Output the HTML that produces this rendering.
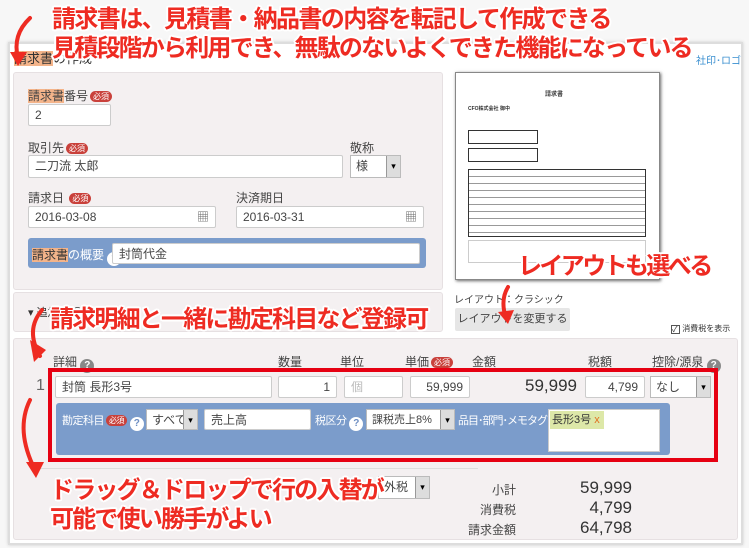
<!DOCTYPE html>
<html><head><meta charset="utf-8">
<style>
*{margin:0;padding:0;box-sizing:border-box}
body{width:749px;height:548px;background:#f7f7f7;position:relative;overflow:hidden;font-family:"Liberation Sans","Noto Sans CJK JP",sans-serif;font-size:12px;color:#333}
.a{position:absolute}
.panel{left:8px;top:42px;width:735px;height:503px;background:#fff;border:2px solid #ddd;box-shadow:0 0 3px #ccc}
.box{background:#f4f0f1;border:1px solid #e6e0e2;border-radius:3px}
.inp{position:absolute;background:#fff;border:1px solid #ccc;border-radius:2px;font-size:12px;line-height:20px;padding:0 6px;color:#444}
.sel{position:absolute;background:#fff;border:1px solid #bbb;font-size:12px;line-height:20px;padding:0 5px;color:#444;white-space:nowrap;overflow:hidden}
.sel:after{content:"▾";position:absolute;right:0;top:0;width:13px;height:100%;background:#ddd;border-left:1px solid #999;font-size:9px;text-align:center;color:#000}
.lbl{position:absolute;font-size:12px;color:#444;white-space:nowrap}
.req{display:inline-block;background:#c9413b;color:#fff;font-size:8px;border-radius:6px;padding:0 3px;line-height:11px;vertical-align:1px;margin-left:2px}
.hl{background:#f4b48a}
.q{display:inline-block;width:14px;height:14px;border-radius:50%;background:#888;color:#fff;font-size:10px;text-align:center;line-height:14px;font-weight:bold;vertical-align:-2px}
.qw{background:#fff;color:#6d8ec2}
.red{position:absolute;color:#ee2b22;font-weight:bold;font-size:24px;letter-spacing:-1.8px;white-space:nowrap;text-shadow:-2px 0 #fff,2px 0 #fff,0 -2px #fff,0 2px #fff,-1.5px -1.5px #fff,1.5px 1.5px #fff,-1.5px 1.5px #fff,1.5px -1.5px #fff;line-height:28px}
.num{position:absolute;font-size:17px;color:#333;text-align:right}
.blab{font-size:11px;letter-spacing:-0.5px;color:#fff}
</style></head><body>
<div class="a panel"></div>
<div class="a" style="left:14px;top:48px;font-size:13px;color:#333"><span class="hl">請求書</span>の作成</div>
<div class="a" style="left:696px;top:52px;font-size:10px;color:#3a8fd0">社印･ロゴ</div>

<div class="a box" style="left:13px;top:72px;width:430px;height:218px"></div>
<div class="lbl" style="left:28px;top:87px"><span class="hl">請求書</span>番号<span class="req">必須</span></div>
<div class="inp" style="left:28px;top:104px;width:83px;height:22px">2</div>
<div class="lbl" style="left:28px;top:139px">取引先<span class="req">必須</span></div>
<div class="inp" style="left:28px;top:155px;width:315px;height:23px">二刀流 太郎</div>
<div class="lbl" style="left:350px;top:139px">敬称</div>
<div class="sel" style="left:350px;top:155px;width:51px;height:23px">様</div>
<div class="lbl" style="left:28px;top:189px">請求日 <span class="req">必須</span></div>
<div class="lbl" style="left:236px;top:189px">決済期日</div>
<div class="inp" style="left:28px;top:206px;width:188px;height:22px">2016-03-08<span style="position:absolute;right:6px;color:#666">▦</span></div>
<div class="inp" style="left:236px;top:206px;width:188px;height:22px">2016-03-31<span style="position:absolute;right:6px;color:#666">▦</span></div>
<div class="a" style="left:28px;top:238px;width:398px;height:30px;background:#7b9ccb;border-radius:3px"></div>
<div class="lbl" style="left:32px;top:246px;color:#fff"><span class="hl" style="color:#333">請求書</span>の概要 <span class="q qw">?</span></div>
<div class="inp" style="left:112px;top:243px;width:308px;height:21px">封筒代金</div>

<div class="a" style="left:455px;top:72px;width:205px;height:208px;background:#fff;border:1px solid #888;box-shadow:1px 1px 3px #666"></div>
<div class="a" style="left:545px;top:89px;font-size:6px;font-weight:bold">請求書</div>
<div class="a" style="left:468px;top:105px;font-size:5px;font-weight:bold">CFO株式会社 御中</div>
<div class="a" style="left:468px;top:130px;width:70px;height:14px;border:1px solid #333"></div>
<div class="a" style="left:468px;top:148px;width:70px;height:14px;border:1px solid #333"></div>
<div class="a" style="left:468px;top:169px;width:178px;height:68px;border:1px solid #333;background:repeating-linear-gradient(#fff 0 6px,#999 6px 7px)"></div>
<div class="a" style="left:468px;top:240px;width:178px;height:23px;border:1px solid #ccc"></div>
<div class="a" style="left:454px;top:291px;font-size:10px;color:#444">レイアウト：クラシック</div>
<div class="a" style="left:455px;top:308px;width:115px;height:23px;background:#e6e6e6;border-radius:2px;font-size:11px;line-height:23px;text-align:center;color:#444">レイアウトを変更する</div>

<div class="a box" style="left:13px;top:292px;width:430px;height:40px"></div>
<div class="a" style="left:28px;top:304px;font-size:11px">▾ 追加情報…</div>
<div class="a" style="left:668px;top:320px;width:71px;height:18px;background:#fff;font-size:8px;line-height:18px;padding-left:3px"><span style="display:inline-block;width:9px;height:9px;border:1px solid #555;font-size:8px;line-height:8px;vertical-align:-1px">✓</span> 消費税を表示</div>

<div class="a box" style="left:13px;top:338px;width:725px;height:202px"></div>
<div class="lbl" style="left:53px;top:353px">詳細 <span class="q">?</span></div>
<div class="lbl" style="left:278px;top:353px">数量</div>
<div class="lbl" style="left:340px;top:353px">単位</div>
<div class="lbl" style="left:405px;top:353px">単価<span class="req">必須</span></div>
<div class="lbl" style="left:472px;top:353px">金額</div>
<div class="lbl" style="left:588px;top:353px">税額</div>
<div class="lbl" style="left:652px;top:353px">控除/源泉 <span class="q">?</span></div>

<div class="a" style="left:48px;top:368px;width:670px;height:94px;border:4px solid #e60012"></div>
<div class="a" style="left:36px;top:377px;font-size:16px;color:#666">1</div>
<div class="inp" style="left:55px;top:376px;width:217px;height:22px">封筒 長形3号</div>
<div class="inp" style="left:278px;top:376px;width:59px;height:22px;text-align:right">1</div>
<div class="inp" style="left:344px;top:376px;width:59px;height:22px;color:#bbb">個</div>
<div class="inp" style="left:410px;top:376px;width:60px;height:22px;text-align:right">59,999</div>
<div class="num" style="left:500px;top:376px;width:77px">59,999</div>
<div class="inp" style="left:585px;top:376px;width:60px;height:22px;text-align:right">4,799</div>
<div class="sel" style="left:650px;top:376px;width:61px;height:22px">なし</div>
<div class="a" style="left:56px;top:403px;width:614px;height:52px;background:#7b9ccb;border-radius:3px"></div>
<div class="lbl blab" style="left:62px;top:412px">勘定科目<span class="req">必須</span> <span class="q qw">?</span></div>
<div class="sel" style="left:146px;top:409px;width:52px;height:21px">すべて</div>
<div class="inp" style="left:204px;top:409px;width:107px;height:21px">売上高</div>
<div class="lbl blab" style="left:315px;top:412px">税区分 <span class="q qw">?</span></div>
<div class="sel" style="left:366px;top:409px;width:89px;height:21px;font-size:11px">課税売上8%</div>
<div class="lbl blab" style="left:458px;top:412px;letter-spacing:-1px">品目･部門･メモタグ</div>
<div class="a" style="left:548px;top:409px;width:112px;height:43px;background:#fff;border:1px solid #ccc"></div>
<div class="a" style="left:550px;top:411px;width:54px;height:18px;background:#dde8a8;font-size:11px;line-height:18px;padding-left:2px">長形3号 <span style="color:#e07020">x</span></div>
<div class="a" style="left:38px;top:468px;width:440px;height:1px;background:#ddd"></div>
<div class="sel" style="left:378px;top:476px;width:52px;height:23px">外税</div>
<div class="lbl" style="left:492px;top:481px">小計</div>
<div class="lbl" style="left:480px;top:501px">消費税</div>
<div class="lbl" style="left:468px;top:521px">請求金額</div>
<div class="num" style="left:540px;top:478px;width:92px">59,999</div>
<div class="num" style="left:540px;top:498px;width:92px">4,799</div>
<div class="num" style="left:540px;top:518px;width:92px">64,798</div>

<svg class="a" style="left:0;top:0" width="749" height="548">
<g fill="none" stroke="#ee2b22" stroke-width="4" stroke-linecap="round">
<path d="M30 18 Q12 35 18 58"/><path d="M40 356 Q25 330 42 310"/><path d="M508 287 Q500 300 506 318"/><path d="M30 400 Q15 430 35 470"/>
</g>
<g fill="#ee2b22"><path d="M10 52 L27 52 L18 66Z"/><path d="M30 340 L46 350 L34 362Z"/><path d="M498 312 L514 310 L508 324Z"/><path d="M26 462 L44 462 L36 478Z"/></g>
</svg>
<div class="red" style="left:52px;top:6px;letter-spacing:-1.6px">請求書は、見積書・納品書の内容を転記して作成できる</div>
<div class="red" style="left:52px;top:35px">見積段階から利用でき、無駄のないよくできた機能になっている</div>
<div class="red" style="left:518px;top:253px;letter-spacing:-2.6px">レイアウトも選べる</div>
<div class="red" style="left:50px;top:306px">請求明細と一緒に勘定科目など登録可</div>
<div class="red" style="left:50px;top:477px">ドラッグ＆ドロップで行の入替が</div>
<div class="red" style="left:50px;top:506px">可能で使い勝手がよい</div>
</body></html>
